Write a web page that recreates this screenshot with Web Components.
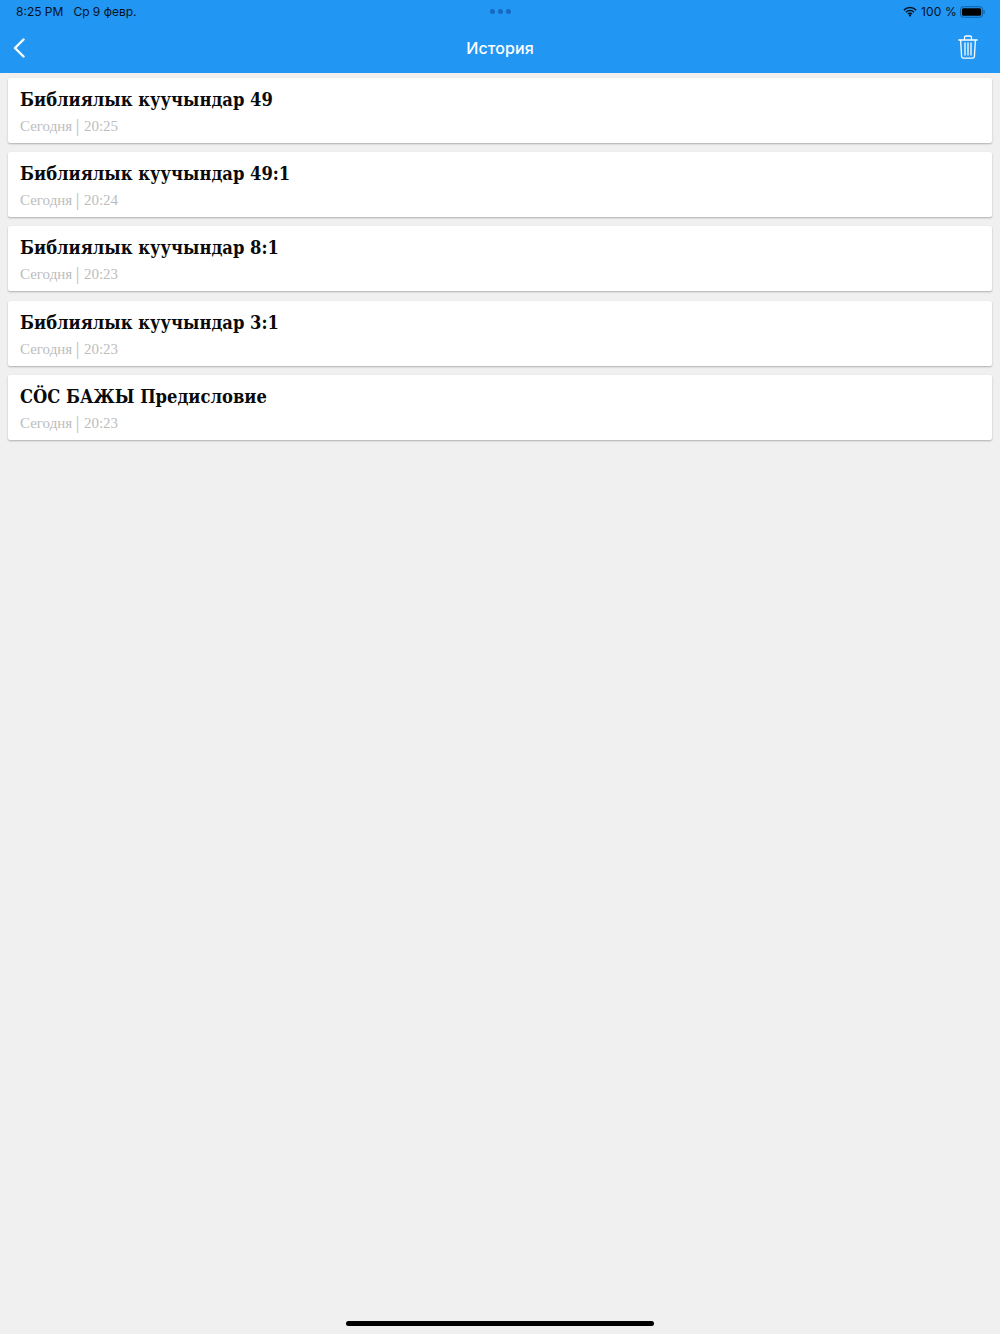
<!DOCTYPE html>
<html lang="ru"><head><meta charset="utf-8"><title>История</title>
<style>html,body{margin:0;height:100%}body{background:#f0f0f0}</style></head>
<body>
<history-app>
<history-item title-text="Библиялык куучындар 49" when="Сегодня" time="20:25"></history-item>
<history-item title-text="Библиялык куучындар 49:1" when="Сегодня" time="20:24"></history-item>
<history-item title-text="Библиялык куучындар 8:1" when="Сегодня" time="20:23"></history-item>
<history-item title-text="Библиялык куучындар 3:1" when="Сегодня" time="20:23"></history-item>
<history-item title-text="СÖС БАЖЫ Предисловие" when="Сегодня" time="20:23"></history-item>
</history-app>
<script>
const def=(n,html)=>customElements.define(n,class extends HTMLElement{connectedCallback(){if(this.shadowRoot)return;const r=this.attachShadow({mode:'open'});r.innerHTML=html(this);}});
def('history-app',()=>`<style>
:host{display:flex;flex-direction:column;height:1334px;background:#f0f0f0;overflow:hidden}
.list{display:flex;flex-direction:column;gap:9.2px;padding:5px 8px 0;flex:1}
.home{flex:none;align-self:center;width:308px;height:5px;border-radius:3px;background:#000;margin-bottom:8px}
</style><app-header></app-header><div class="list"><slot></slot></div><div class="home"></div>`);
def('app-header',()=>`<style>
:host{display:block;flex:none;height:73px;background:#2196f3;box-sizing:border-box;font-family:Inter,"Liberation Sans",sans-serif}
.status{height:23px;display:grid;grid-template-columns:1fr auto 1fr;align-items:center;padding:0 15px 0 16px;font-size:12px;color:#07121f}
.l{display:flex;gap:10px}.r{display:flex;align-items:center;justify-content:flex-end;gap:4px}
.dots{display:flex;gap:2.8px}.dots i{width:5px;height:5px;border-radius:50%;background:#1668c2}
.nav{height:50px;display:grid;grid-template-columns:1fr auto 1fr;align-items:center;padding:0 22px 0 12px;color:#fff}
.nav h1{margin:0;font-size:16px;font-weight:500;letter-spacing:.1px;position:relative;left:5px}
.nav svg{display:block}.trash{justify-self:end}
</style>
<div class="status"><div class="l"><span>8:25 PM</span><span>Ср 9 февр.</span></div>
<div class="dots"><i></i><i></i><i></i></div>
<div class="r"><svg width="14" height="11" viewBox="0 0 15 11"><path d="M1 4a9.2 9.2 0 0 1 13 0M3.2 6.3a6.1 6.1 0 0 1 8.6 0M5.3 8.2a3.1 3.1 0 0 1 4.4 0" fill="none" stroke="#07121f" stroke-width="1.6"/><circle cx="7.5" cy="9.7" r="1.2" fill="#07121f"/></svg><span style="letter-spacing:.15px">100 %</span>
<svg width="25" height="12" viewBox="0 0 26 12" style="margin-left:-1px"><rect x=".5" y=".5" width="23" height="11" rx="3" fill="none" stroke="#0b4f8f" stroke-opacity=".8"/><rect x="2" y="2" width="20" height="8" rx="1.6" fill="#000"/><rect x="24.4" y="4" width="1.3" height="4" rx=".6" fill="#0b4f8f" fill-opacity=".7"/></svg></div></div>
<div class="nav"><svg width="14" height="20" viewBox="0 0 14 20"><path d="M11.500 1.500 3 10l8.500 8.500" fill="none" stroke="#fff" stroke-width="2.400" stroke-linecap="round" stroke-linejoin="round"/></svg><h1>История</h1>
<svg class="trash" width="20" height="24" viewBox="0 0 20 24" fill="none" stroke="#fff" stroke-width="1.300" stroke-linecap="round" stroke-linejoin="round" style="margin-top:-2px"><path d="M.8 5h18.400M6.500 5V2.600Q6.500 1 8 1h4q1.500 0 1.500 1.600V5M2.600 5l1 16.500q.1 1.700 1.800 1.700h9.200q1.700 0 1.800-1.700l1-16.500M7 8v12M10 8v12M13 8v12"/></svg></div>`);
def('history-item',e=>`<style>
:host{display:block;height:65px;box-sizing:border-box;background:#fff;border-radius:2px;box-shadow:0 1px 2px rgba(0,0,0,.28);padding:10px 12px 0;font-family:"DejaVu Serif Condensed","DejaVu Serif","Liberation Serif",serif}
.t{font-size:18.2px;font-weight:700;line-height:24px;color:#0a0a0a;font-stretch:condensed}
.m{font-family:"Liberation Serif",serif;font-size:15px;line-height:18px;margin-top:5px;color:#bdbdbd;display:flex;align-items:center;gap:3.500px}
.s{font-size:18px;line-height:18px;margin-right:1px}
</style><div class="t">${e.getAttribute('title-text')}</div><div class="m"><span>${e.getAttribute('when')}</span><span class="s">|</span><span>${e.getAttribute('time')}</span></div>`);
</script>
</body></html>
